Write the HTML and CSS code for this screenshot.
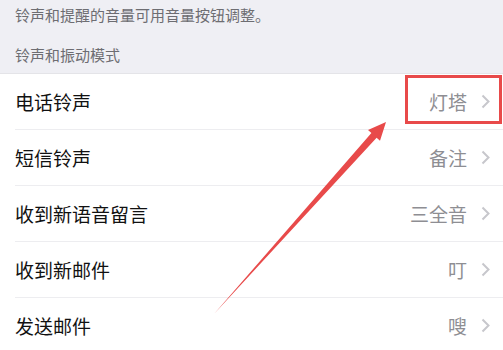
FILE: index.html
```html
<!DOCTYPE html>
<html lang="zh-CN">
<head>
  <meta charset="UTF-8" />
  <meta name="viewport" content="width=device-width, initial-scale=1.0"/>
  <title>声音</title>
  <link rel="stylesheet" href="styles.css">
</head>
<body>
  <p class="note">铃声和提醒的音量可用音量按钮调整。</p>
  <p class="sectionTitle">铃声和振动模式</p>

  <ul class="list">
    <li class="item">
      <div class="itemInner">
        <span class="label">电话铃声</span>
        <span class="value">灯塔</span>
        <svg class="chevron" width="9" height="15" viewBox="0 0 9 15"><polyline points="1.5,1.5 7.5,7.5 1.5,13.5" /></svg>
      </div>
    </li>
    <li class="item">
      <div class="itemInner">
        <span class="label">短信铃声</span>
        <span class="value">备注</span>
        <svg class="chevron" width="9" height="15" viewBox="0 0 9 15"><polyline points="1.5,1.5 7.5,7.5 1.5,13.5" /></svg>
      </div>
    </li>
    <li class="item">
      <div class="itemInner">
        <span class="label">收到新语音留言</span>
        <span class="value">三全音</span>
        <svg class="chevron" width="9" height="15" viewBox="0 0 9 15"><polyline points="1.5,1.5 7.5,7.5 1.5,13.5" /></svg>
      </div>
    </li>
    <li class="item">
      <div class="itemInner">
        <span class="label">收到新邮件</span>
        <span class="value">叮</span>
        <svg class="chevron" width="9" height="15" viewBox="0 0 9 15"><polyline points="1.5,1.5 7.5,7.5 1.5,13.5" /></svg>
      </div>
    </li>
    <li class="item">
      <div class="itemInner">
        <span class="label">发送邮件</span>
        <span class="value">嗖</span>
        <svg class="chevron" width="9" height="15" viewBox="0 0 9 15"><polyline points="1.5,1.5 7.5,7.5 1.5,13.5" /></svg>
      </div>
    </li>
  </ul>

  <!-- annotation drawn over the screenshot -->
  <svg class="markup" width="503" height="350" viewBox="0 0 503 350">
    <rect class="highlight" x="406.5" y="76.5" width="94" height="46" />
    <polygon class="arrow" points="214,314 371.4,133.1 368,130.1 386,122 380,140.7 376.6,137.7" />
  </svg>
</body>
</html>
```

FILE: styles.css
```css
body {
  margin: 0;
  background: #efeff4;
  font-family: "Noto Sans CJK SC", "Noto Sans", sans-serif;
  position: relative;
  height: 350px;
  overflow: hidden;
}

.note,
.sectionTitle {
  margin: 0;
  padding-left: 15px;
  font-size: 15px;
  line-height: 22px;
  color: #6d6d72;
}

.note {
  padding-top: 4px;
}

.sectionTitle {
  padding-top: 18px;
  padding-bottom: 7px;
}

.list {
  list-style: none;
  margin: 0;
  padding: 0;
  background: #fff;
  border-top: 1px solid #e4e4e8;
}

.item {
  padding-left: 15px;
}

.itemInner {
  display: flex;
  align-items: center;
  height: 55px;
  padding-right: 13px;
  border-bottom: 1px solid #ededf0;
}

.label {
  flex: 1;
  font-size: 19px;
  color: #111;
}

.value {
  font-size: 19px;
  color: #8e8e93;
  margin-right: 14px;
}

.chevron polyline {
  fill: none;
  stroke: #c7c7cc;
  stroke-width: 2;
}

.markup {
  position: absolute;
  left: 0;
  top: 0;
}

.highlight {
  fill: none;
  stroke: #e84a4a;
  stroke-width: 3;
}

.arrow {
  fill: #e84a4a;
}
```
